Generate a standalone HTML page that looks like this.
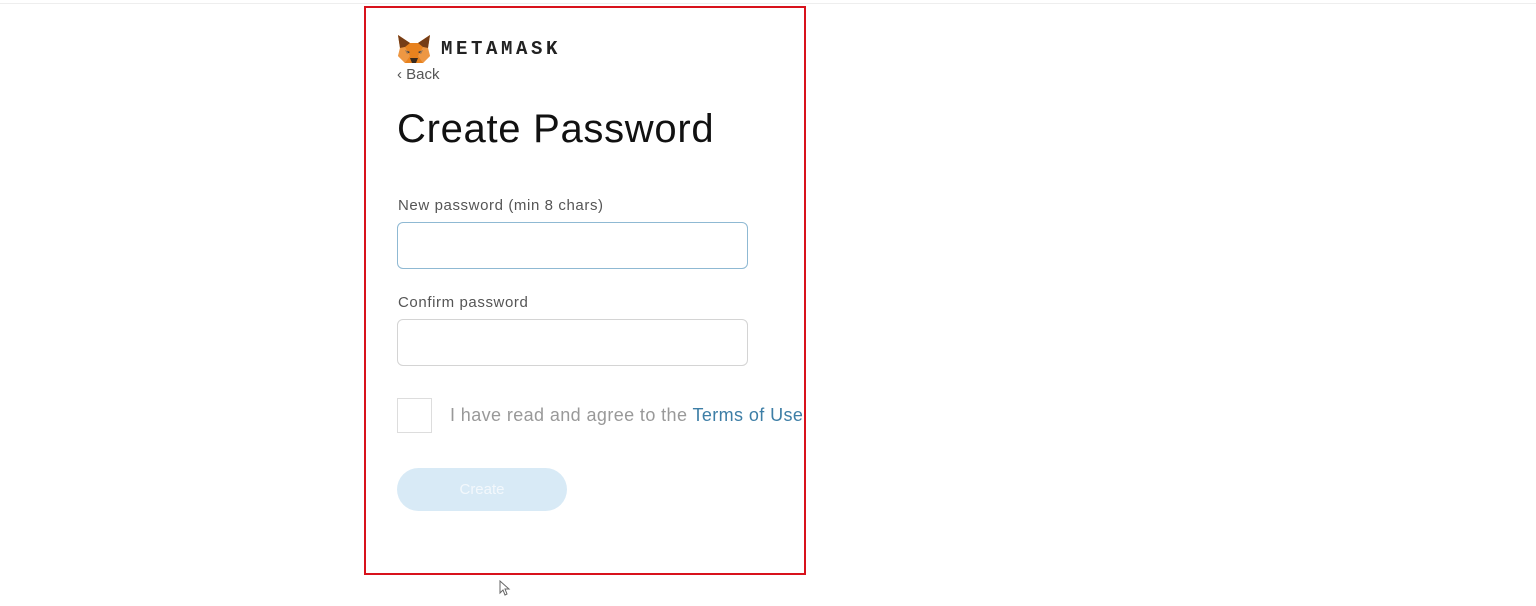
<!DOCTYPE html>
<html><head><meta charset="utf-8"><style>
body{margin:0;width:1536px;height:606px;background:#fff;position:relative;overflow:hidden;font-family:"Liberation Sans",sans-serif}
.topline{position:absolute;left:0;top:3px;width:1536px;height:1px;background:#eee}
.box{position:absolute;left:364px;top:6px;width:438px;height:565px;border:2px solid #d8121c}
.a{position:absolute;white-space:nowrap}
.inp{position:absolute;left:397px;width:351px;height:47px;border:1px solid #d4d4d4;border-radius:6px;box-sizing:border-box}
</style></head><body>
<div class="topline"></div>
<div class="box"></div>
<svg class="a" style="left:397px;top:34px" width="34" height="30" viewBox="0 0 34 30">
<polygon points="1,1 13,9 21,9 33,1 31,14 33,22 26,29 8,29 1,22 3,14" fill="#e8821e"/>
<polygon points="1,1 13,9 8,13 3,14" fill="#763d16"/>
<polygon points="33,1 21,9 26,13 31,14" fill="#763d16"/>
<polygon points="13,24 21,24 19,29 15,29" fill="#3a2a1c"/>
<polygon points="8,16 13,18 10,20" fill="#233447"/>
<polygon points="26,16 21,18 24,20" fill="#233447"/>
<polygon points="3,14 8,13 13,22 8,29 1,22" fill="#f0a55c" opacity=".6"/>
<polygon points="31,14 26,13 21,22 26,29 33,22" fill="#f0a55c" opacity=".6"/>
</svg>
<div class="a" style="left:441px;top:38px;font-family:'Liberation Mono',monospace;font-weight:bold;font-size:19px;letter-spacing:3.6px;color:#222">METAMASK</div>
<div class="a" style="left:397px;top:66px;font-size:15px;color:#555">‹ Back</div>
<div class="a" style="left:397px;top:107px;font-size:40px;letter-spacing:0.7px;color:#111">Create Password</div>
<div class="a" style="left:398px;top:197px;font-size:15px;letter-spacing:0.6px;color:#555">New password (min 8 chars)</div>
<div class="inp" style="top:222px;border-color:#8fb9d3"></div>
<div class="a" style="left:398px;top:294px;font-size:15px;letter-spacing:0.6px;color:#555">Confirm password</div>
<div class="inp" style="top:319px"></div>
<div class="a" style="left:397px;top:398px;width:35px;height:35px;border:1px solid #ddd;box-sizing:border-box"></div>
<div class="a" style="left:450px;top:405px;font-size:18px;letter-spacing:0.4px;color:#999">I have read and agree to the <span style="color:#3d7ea6">Terms of Use</span></div>
<div class="a" style="left:397px;top:468px;width:170px;height:43px;border-radius:22px;background:#d8eaf6;color:#f3f8fc;font-size:15px;text-align:center;line-height:43px">Create</div>
<svg class="a" style="left:499px;top:580px" width="12" height="16" viewBox="0 0 12 16"><path d="M1 1v12l3-3 2 5 2-1-2-5h4z" fill="#fff" stroke="#666"/></svg>
</body></html>
